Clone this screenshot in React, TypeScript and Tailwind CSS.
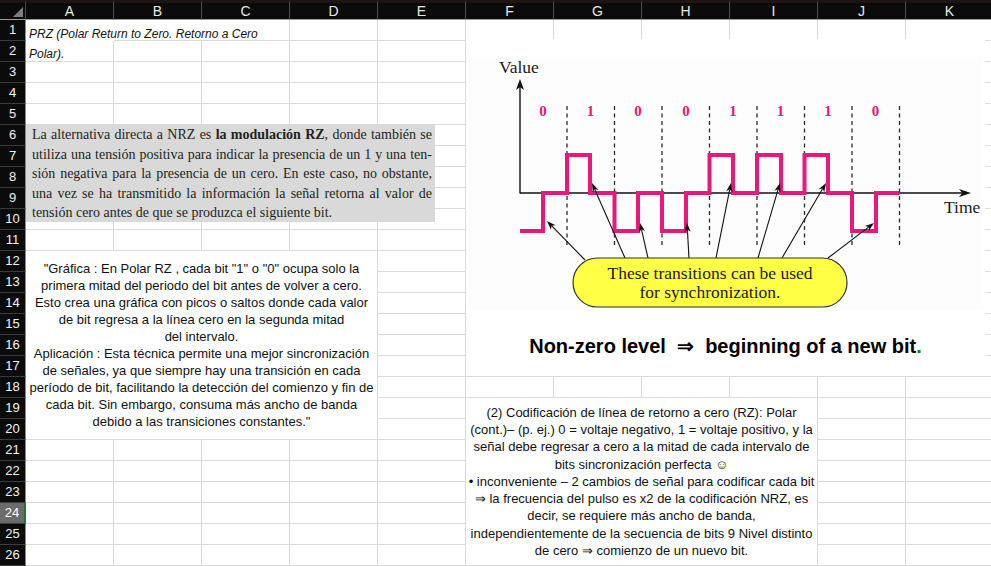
import React from 'react';

const COLS = ['A', 'B', 'C', 'D', 'E', 'F', 'G', 'H', 'I', 'J', 'K'];
const ROWS = Array.from({ length: 26 }, (_, i) => i + 1);

const quoteLines = [
  '"Gráfica : En Polar RZ , cada bit "1" o "0" ocupa solo la',
  'primera mitad del periodo del bit antes de volver a cero.',
  'Esto crea una gráfica con picos o saltos donde cada valor',
  'de bit regresa a la línea cero en la segunda mitad',
  'del intervalo.',
  'Aplicación : Esta técnica permite una mejor sincronización',
  'de señales, ya que siempre hay una transición en cada',
  'período de bit, facilitando la detección del comienzo y fin de',
  'cada bit. Sin embargo, consuma más ancho de banda',
  'debido a las transiciones constantes."',
];

const rzLines = [
  '(2) Codificación de línea de retorno a cero (RZ): Polar',
  '(cont.)– (p. ej.) 0 = voltaje negativo, 1 = voltaje positivo, y la',
  'señal debe regresar a cero a la mitad de cada intervalo de',
  'bits sincronización perfecta ☺',
  '• inconveniente – 2 cambios de señal para codificar cada bit',
  '⇒ la frecuencia del pulso es x2 de la codificación NRZ, es',
  'decir, se requiere más ancho de banda,',
  'independientemente de la secuencia de bits 9 Nivel distinto',
  'de cero ⇒ comienzo de un nuevo bit.',
];

// bit boundaries of the waveform
const ticks = [567, 614.5, 662, 709.5, 757, 804.5, 852, 899.5];
const bits = ['0', '1', '0', '0', '1', '1', '1', '0'];
const bitX = [543, 590.5, 638, 686, 733, 780.5, 828, 875.5];

const signal = [
  [520, 231], [543, 231], [543, 193], [567, 193], [567, 155], [590, 155], [590, 193],
  [614.5, 193], [614.5, 231], [638, 231], [638, 193], [662, 193], [662, 231], [686, 231],
  [686, 193], [709.5, 193], [709.5, 155], [733, 155], [733, 193], [757, 193], [757, 155],
  [781, 155], [781, 193], [804.5, 193], [804.5, 155], [828, 155], [828, 193], [852, 193],
  [852, 231], [876, 231], [876, 193], [899.5, 193],
];

const pointers = [
  [585, 260, 547, 221],
  [625, 258, 592, 183],
  [648, 258, 640, 223],
  [689, 258, 687, 223],
  [716, 258, 731, 183],
  [758, 258, 780, 183],
  [782, 258, 826, 183],
  [828, 258, 874, 223],
];

function arrowHead(x1: number, y1: number, x2: number, y2: number, len = 9, w = 3.2) {
  const d = Math.hypot(x2 - x1, y2 - y1);
  const ux = (x2 - x1) / d;
  const uy = (y2 - y1) / d;
  const bx = x2 - ux * len;
  const by = y2 - uy * len;
  const nx = x2 - ux * len * 0.72;
  const ny = y2 - uy * len * 0.72;
  return {
    points: `${x2},${y2} ${bx - uy * w},${by + ux * w} ${nx},${ny} ${bx + uy * w},${by - ux * w}`,
    nx,
    ny,
  };
}

function isCovered(r: number, c: number) {
  if (r === 1 && (c === 1 || c === 2)) return true;
  if (r >= 12 && r <= 20 && c <= 3 && !(r === 12 && c === 0)) return true;
  if (r >= 19 && c >= 5 && c <= 8 && !(r === 19 && c === 5)) return true;
  return false;
}

function Diagram() {
  const yAxis = arrowHead(520, 193, 520, 79, 11, 4);
  const xAxis = arrowHead(520, 193, 971, 193, 12, 4);
  return (
    <svg width="519" height="285" viewBox="466 39 519 285" className="block">
      <rect x="467" y="57" width="516" height="253" fill="#fdfdfd" />
      <text x="499" y="73" fontFamily="Liberation Serif, serif" fontSize="17.5" fill="#1a1a1a">
        Value
      </text>
      <text x="944" y="213" fontFamily="Liberation Serif, serif" fontSize="17.5" fill="#1a1a1a">
        Time
      </text>

      {ticks.map((x) => (
        <line key={x} x1={x} y1="106" x2={x} y2="246" stroke="#2a2a2a" strokeWidth="1.3" strokeDasharray="4 3.5" />
      ))}

      <line x1="520" y1="193.5" x2="520" y2={yAxis.ny} stroke="#111" strokeWidth="1.4" />
      <polygon points={yAxis.points} fill="#111" />
      <line x1="520" y1="193" x2={xAxis.nx} y2="193" stroke="#111" strokeWidth="1.4" />
      <polygon points={xAxis.points} fill="#111" />

      {bits.map((b, i) => (
        <text
          key={i}
          x={bitX[i]}
          y="115.5"
          textAnchor="middle"
          fontFamily="Liberation Serif, serif"
          fontWeight="bold"
          fontSize="15"
          fill="#e8157c"
        >
          {b}
        </text>
      ))}

      <polyline
        points={signal.map((p) => p.join(',')).join(' ')}
        fill="none"
        stroke="#e8197d"
        strokeWidth="4"
        strokeLinejoin="miter"
      />

      {pointers.map(([x1, y1, x2, y2], i) => {
        const h = arrowHead(x1, y1, x2, y2);
        return (
          <g key={i}>
            <line x1={x1} y1={y1} x2={h.nx} y2={h.ny} stroke="#111" strokeWidth="1.1" />
            <polygon points={h.points} fill="#111" />
          </g>
        );
      })}

      <rect x="573" y="258" width="274" height="49" rx="24.5" fill="#ffff45" stroke="#333" strokeWidth="1.2" />
      <text x="710" y="279" textAnchor="middle" fontFamily="Liberation Serif, serif" fontSize="17.5" fill="#1a1a1a">
        These transitions can be used
      </text>
      <text x="710" y="298" textAnchor="middle" fontFamily="Liberation Serif, serif" fontSize="17.5" fill="#1a1a1a">
        for synchronization.
      </text>
    </svg>
  );
}

export default function App() {
  const cell = 'border-r border-b border-[#dadada]';

  const items: React.ReactNode[] = [];

  // column header row
  items.push(
    <div key="corner" className="relative bg-[#0b0b0b] border-t-[3px] border-t-[#1d1414] border-b border-b-[#9c9c9c] border-r border-r-[#4a4a4a]">
      <svg className="absolute right-[2px] bottom-[2px]" width="10" height="10" viewBox="0 0 10 10">
        <polygon points="10,0 10,10 0,10" fill="#7d7d7d" />
      </svg>
    </div>
  );
  COLS.forEach((c) =>
    items.push(
      <div
        key={`h${c}`}
        className="flex items-center justify-center bg-[#0b0b0b] border-t-[3px] border-t-[#1d1414] border-b border-b-[#9c9c9c] border-r border-r-[#4f4f4f] text-[14px] text-[#e8e8e8]"
      >
        {c}
      </div>
    )
  );

  ROWS.forEach((r) => {
    items.push(
      <div
        key={`r${r}`}
        className={
          r === 24
            ? 'flex items-center justify-center bg-[#6b6b6b] border-b border-b-[#3c3c3c] border-r-2 border-r-[#217346] text-[13px] text-white'
            : 'flex items-center justify-center bg-[#0b0b0b] border-b border-b-[#3c3c3c] border-r border-r-[#8a8a8a] text-[13px] text-[#f2f2f2]'
        }
      >
        {r}
      </div>
    );

    COLS.forEach((_, c) => {
      if (isCovered(r, c)) return;

      if (r === 1 && c === 0) {
        items.push(
          <div key="a1" className="col-span-3 flex">
            <div className="w-[88px] flex items-end pl-[3px] text-[12px] leading-[14px] italic text-[#111] whitespace-nowrap">
              PRZ (Polar Return to Zero. Retorno a Cero
            </div>
            <div className="flex-1 border-r border-b border-[#dadada]" />
          </div>
        );
        return;
      }
      if (r === 2 && c === 0) {
        items.push(
          <div key="a2" className={`${cell} flex items-end pl-[3px] text-[12px] leading-[14px] italic text-[#111]`}>
            Polar).
          </div>
        );
        return;
      }
      if (r === 12 && c === 0) {
        items.push(
          <div
            key="quote"
            className={`${cell} col-span-4 row-span-9 flex flex-col items-center justify-center text-center text-[13px] leading-[17.1px] text-[#111]`}
          >
            {quoteLines.map((l, i) => (
              <div key={i} className="whitespace-nowrap">
                {l}
              </div>
            ))}
          </div>
        );
        return;
      }
      if (r === 19 && c === 5) {
        items.push(
          <div
            key="rz"
            className={`${cell} col-span-4 row-span-8 flex flex-col items-center justify-center text-center text-[13px] leading-[17.2px] text-[#111]`}
          >
            {rzLines.map((l, i) => (
              <div key={i} className="whitespace-nowrap">
                {l}
              </div>
            ))}
          </div>
        );
        return;
      }
      items.push(<div key={`${r}-${c}`} className={cell} />);
    });
  });

  return (
    <div className="w-[991px] h-[566px] overflow-hidden bg-white font-['Liberation_Sans',Arial,sans-serif]">
      <div className="relative grid grid-cols-[26px_repeat(11,88px)] grid-rows-[20px_repeat(26,21px)] w-[994px]">
        {items}

        {/* floating text box */}
        <div className="absolute left-[26px] top-[125px] w-[409px] h-[97px] bg-[#d9d9d9] pl-[6px] pr-[3px] font-['Liberation_Serif',serif] text-[14px] leading-[19.5px] text-[#231f20]">
          <div className="text-justify [text-align-last:justify] whitespace-nowrap">
            La alternativa directa a NRZ es <b>la modulación RZ</b>, donde también se
          </div>
          <div className="text-justify [text-align-last:justify] whitespace-nowrap">
            utiliza una tensión positiva para indicar la presencia de un 1 y una ten-
          </div>
          <div className="text-justify [text-align-last:justify] whitespace-nowrap">
            sión negativa para la presencia de un cero. En este caso, no obstante,
          </div>
          <div className="text-justify [text-align-last:justify] whitespace-nowrap">
            una vez se ha transmitido la información la señal retorna al valor de
          </div>
          <div className="whitespace-nowrap">tensión cero antes de que se produzca el siguiente bit.</div>
        </div>

        {/* floating picture */}
        <div className="absolute left-[466px] top-[39px] w-[519px] h-[337px] bg-white flex flex-col">
          <Diagram />
          <div className="h-[44px] flex items-center justify-center text-[20px] font-bold text-black whitespace-nowrap">
            Non-zero level&nbsp;&nbsp;⇒&nbsp;&nbsp;beginning of a new bit<span className="text-[#0a8a0a]">.</span>
          </div>
        </div>
      </div>
    </div>
  );
}
